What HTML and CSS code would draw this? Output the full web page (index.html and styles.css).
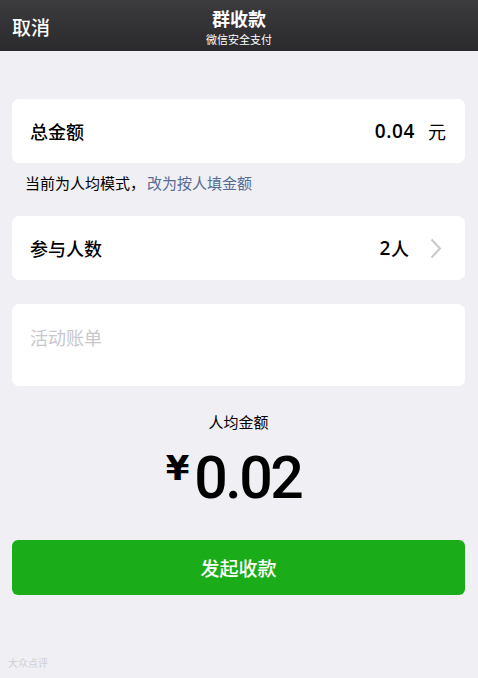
FILE: index.html
```html
<!DOCTYPE html>
<html lang="zh-CN">
<head>
<meta charset="utf-8">
<link rel="stylesheet" href="styles.css">
</head>
<body>
<header class="nav">
  <div class="nav-left">取消</div>
  <div class="nav-title">
    <div class="title">群收款</div>
    <div class="subtitle">微信安全支付</div>
  </div>
  <div class="nav-right"></div>
</header>
<main class="content">
  <div class="card row">
    <span class="label">总金额</span>
    <span class="value"><span class="num">0.04</span><span class="unit">元</span></span>
  </div>
  <div class="hint">当前为人均模式，<span class="link">改为按人填金额</span></div>
  <div class="card row row-nav">
    <span class="label">参与人数</span>
    <span class="value"><span class="num">2</span><span class="ren">人</span>
      <svg class="chev" width="12" height="21" viewBox="0 0 12 21"><path d="M1.5 1.5 L10 10.5 L1.5 19.5" fill="none" stroke="#c8c8cd" stroke-width="2"/></svg>
    </span>
  </div>
  <div class="card memo"><span class="placeholder">活动账单</span></div>
  <div class="avg-label">人均金额</div>
  <div class="avg"><span class="yen">¥</span><span class="amount">0.02</span></div>
  <button class="btn">发起收款</button>
</main>
<div class="wm">大众点评</div>
</body>
</html>
```
FILE: styles.css
```css
html, body { margin: 0; padding: 0; }
body {
  width: 478px; height: 678px; overflow: hidden;
  background: #efeff4;
  font-family: "Noto Sans CJK SC", "Noto Sans", sans-serif;
  color: #000;
  position: relative;
}
.nav {
  height: 51px;
  background: linear-gradient(#3c3c3e, #2a2a2c);
  display: flex; align-items: center;
  color: #fff;
  padding: 0 12px;
  box-sizing: border-box;
}
.nav-left { width: 80px; font-size: 19px; font-weight: 500; margin-top: 2px; }
.nav-right { width: 80px; }
.nav-title { flex: 1; text-align: center; }
.title { font-size: 18px; font-weight: 700; line-height: 26px; }
.subtitle { font-size: 11px; line-height: 16px; }
.content { padding: 48px 13px 0 12px; display: flex; flex-direction: column; }
.card { background: #fff; border-radius: 7px; }
.row {
  height: 64px; display: flex; align-items: center; justify-content: space-between;
  padding: 0 19px 0 18px; box-sizing: border-box;
}
.row-nav { padding-right: 23px; }
.label { font-size: 18px; font-weight: 500; }
.value { display: flex; align-items: center; font-size: 18px; font-weight: 600; }
.num { font-family: "Open Sans", "Noto Sans CJK SC", sans-serif; font-weight: 600; font-size: 19px; letter-spacing: 0.6px; }
.unit { font-size: 18px; font-weight: 400; margin-left: 13px; }
.ren { font-size: 18px; font-weight: 500; }
.chev { margin-left: 21px; }
.hint { font-size: 15px; padding: 8px 0 0 13px; height: 45px; box-sizing: border-box; line-height: 24px; }
.link { color: #576b95; margin-left: 2px; }
.hint + .card { margin-top: 8px; }
.memo { margin-top: 24px; height: 82px; padding: 20px 18px; box-sizing: border-box; }
.placeholder { color: #c7c7cc; font-size: 18px; }
.avg-label { text-align: center; font-size: 15px; margin-top: 25px; line-height: 22px; }
.avg { display: flex; justify-content: center; align-items: flex-start; margin-top: 14px; height: 62px; padding-right: 10px; }
.yen { font-family: "DejaVu Sans", sans-serif; font-size: 34px; font-weight: 700; line-height: 40px; margin-right: 5px; margin-top: 1px; }
.amount { font-family: Roboto, "DejaVu Sans", sans-serif; font-size: 59px; font-weight: 500; line-height: 62px; letter-spacing: -2.5px; }
.btn {
  margin-top: 31px; height: 55px; border: none; border-radius: 6px;
  background: #1aad19; color: #fff; font-family: inherit; font-size: 19px; font-weight: 500;
}
.wm { position: absolute; left: 8px; bottom: 8px; font-size: 10px; color: #d0d0d4; }
```
